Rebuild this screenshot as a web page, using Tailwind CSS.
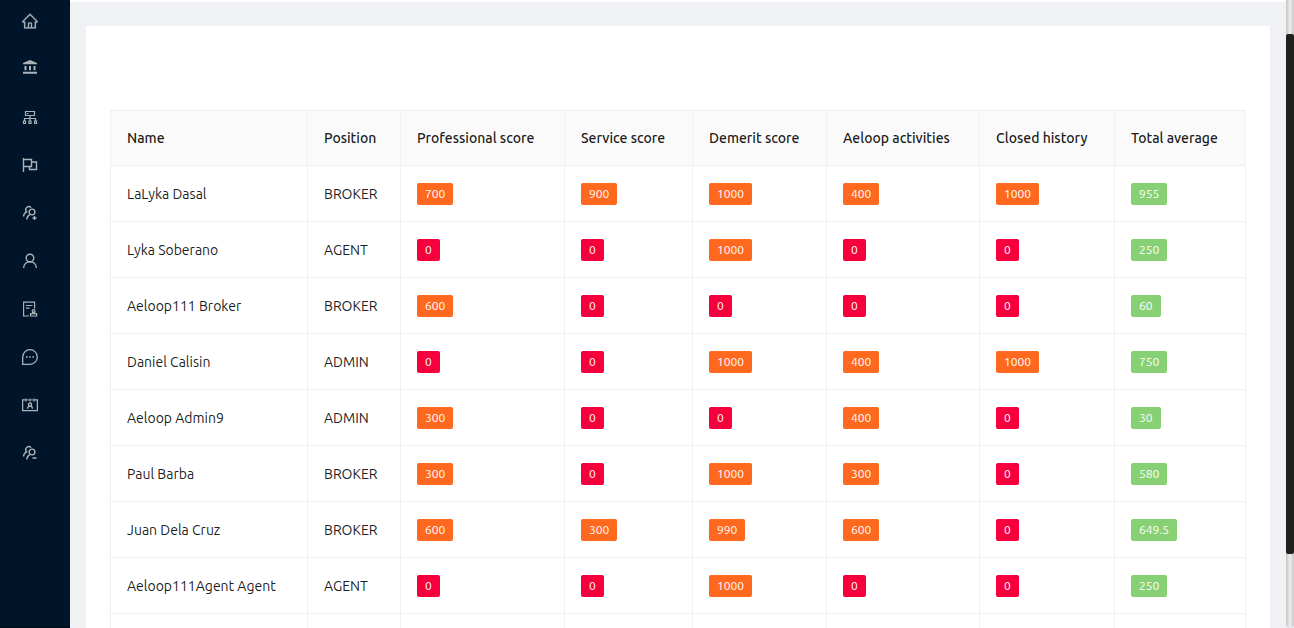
<!DOCTYPE html>
<html lang="en">
<head>
<meta charset="utf-8">
<meta name="viewport" content="width=device-width, initial-scale=1">
<title>Scores</title>
<script src="https://cdn.jsdelivr.net/npm/@tailwindcss/browser@4"></script>
</head>
<body class="flex h-screen overflow-hidden bg-[#f0f2f5] font-['Ubuntu','Noto_Sans',sans-serif] text-sm text-black/90">
<nav aria-label="Main" class="w-[70px] shrink-0 border-b border-[#000c17] bg-[#001529] text-[#abb2b9]">
  <ul class="-mt-[3px] flex flex-col">
    <li><a href="#" aria-label="Home" class="flex h-12 items-center pl-[22px]"><svg class="size-4" viewBox="48 48 928 928" fill="currentColor" stroke="currentColor" stroke-width="14"><path d="M946.5 505L560.1 118.8l-25.9-25.9a31.5 31.5 0 00-44.4 0L77.5 505a63.9 63.9 0 00-18.8 46c.4 35.2 29.7 63.3 64.9 63.3h42.5V940h691.8V614.3h43.4c17.1 0 33.2-6.7 45.3-18.8a63.6 63.6 0 0018.7-45.3c0-17-6.7-33.1-18.8-45.2zM568 868H456V664h112v204zm217.9-325.7V868H632V640c0-22.1-17.9-40-40-40H432c-22.1 0-40 17.9-40 40v228H238.1V542.3h-96l370-369.7 23.1 23.1L882 542.3h-96.1z"/></svg></a></li>
    <li><a href="#" aria-label="Bank" class="flex h-12 items-start pt-3.5 pl-[22px]"><svg class="size-4" viewBox="0 0 16 16" fill="currentColor"><path d="M8 1l7 3v1.2H1V4zM2.5 7h2v4.2h-2zM7 7h2v4.2H7zM11.5 7h2v4.2h-2zM1 12.8h14v1.9H1z"/></svg></a></li>
    <li><a href="#" aria-label="Organization" class="flex h-12 items-center pl-[22px]"><svg class="size-4" viewBox="0 0 16 16" fill="none" stroke="currentColor" stroke-width="1.2"><path d="M3.5 2.5h9v4h-9zM5 4.5h1.5M8 6.5v5M2.5 11.5v-2h11v2M1.5 12h2v2.5h-2zM7 12h2v2.5H7zM12.5 12h2v2.5h-2z"/></svg></a></li>
    <li><a href="#" aria-label="Flags" class="flex h-12 items-center pl-[22px]"><svg class="size-4" viewBox="0 0 16 16" fill="none" stroke="currentColor" stroke-width="1.4"><path d="M1.5 1v14M1.5 2.5h8v7h-8M9.5 5h5v7.5h-7v-3"/></svg></a></li>
    <li><a href="#" aria-label="Add users" class="flex h-12 items-center pl-[22px]"><svg class="size-4" viewBox="0 0 16 16" fill="none" stroke="currentColor" stroke-width="1.4"><path d="M9.2 2.6A3.1 3.1 0 1 0 4.6 6.8C2.8 7.6 1.7 9.3 1.5 11.5M7.8 9.6c-1.7.8-2.8 2.6-3 4.9M12.5 11v4M10.5 13h4"/><circle cx="10" cy="7" r="2.9"/></svg></a></li>
    <li><a href="#" aria-label="User" class="flex h-12 items-center pl-[22px]"><svg class="size-4" viewBox="0 0 16 16" fill="none" stroke="currentColor" stroke-width="1.4"><circle cx="8" cy="5" r="3.8"/><path d="M1.6 15c.2-3.6 2.8-6.2 6.4-6.2s6.2 2.6 6.4 6.2"/></svg></a></li>
    <li><a href="#" aria-label="Audit" class="flex h-12 items-center pl-[22px]"><svg class="size-4" viewBox="0 0 16 16" fill="none" stroke="currentColor" stroke-width="1.2"><path d="M7 15H1.6V1.2h11v6.3M4 4.5h6.5M4 7.2h3.5M8.6 15v-2.4h6V15zM10.6 12.6v-1.2h2v1.2"/><circle cx="11.6" cy="10" r="1.4"/></svg></a></li>
    <li><a href="#" aria-label="Messages" class="flex h-12 items-center pl-[22px]"><svg class="size-4" viewBox="0 0 16 16" fill="none" stroke="currentColor" stroke-width="1.3"><path d="M.7 15.3V8A7.3 7.3 0 1 1 8 15.3z"/><path fill="currentColor" stroke="none" d="M4 7.2h1.6v1.6H4zM7.2 7.2h1.6v1.6H7.2zM10.4 7.2H12v1.6h-1.6z"/></svg></a></li>
    <li><a href="#" aria-label="Contacts" class="flex h-12 items-center pl-[22px]"><svg class="size-4" viewBox="0 0 16 16" fill="none" stroke="currentColor" stroke-width="1.3"><path d="M3.2 2.9H.6v10.8h14.8V2.9h-2.6M4 1.5v3M8 1.5v3M12 1.5v3M5.2 2.9h1.6M9.2 2.9h1.6M5.5 11.8c.1-1.6 1-2.6 2.5-2.6s2.4 1 2.5 2.6"/><circle cx="8" cy="7.6" r="1.6"/></svg></a></li>
    <li><a href="#" aria-label="Remove users" class="flex h-12 items-center pl-[22px]"><svg class="size-4" viewBox="0 0 16 16" fill="none" stroke="currentColor" stroke-width="1.4"><path d="M9.2 2.6A3.1 3.1 0 1 0 4.6 6.8C2.8 7.6 1.7 9.3 1.5 11.5M7.8 9.6c-1.7.8-2.8 2.6-3 4.9M10.5 13h4"/><circle cx="10" cy="7" r="2.9"/></svg></a></li>
  </ul>
</nav>
<main class="min-w-0 flex-1 overflow-hidden border-t-2 border-white bg-[#f0f1f5] px-4 pt-6">
  <section class="bg-white px-6 pt-[84px] pb-6">
    <table class="w-full table-fixed border-separate border-spacing-0 border-t border-l border-[#f0f0f0] text-left whitespace-nowrap [&_td]:h-14 [&_td]:border-r [&_td]:border-b [&_td]:border-[#f0f0f0] [&_td]:px-4 [&_td]:py-0 [&_th]:h-[55px] [&_th]:border-r [&_th]:border-b [&_th]:border-[#f0f0f0] [&_th]:bg-[#fafafa] [&_th]:px-4 [&_th]:font-medium">
      <thead>
        <tr><th scope="col" class="w-[197px]">Name</th><th scope="col" class="w-[93px]">Position</th><th scope="col" class="w-[164px]">Professional score</th><th scope="col" class="w-[128px]">Service score</th><th scope="col" class="w-[134px]">Demerit score</th><th scope="col" class="w-[153px]">Aeloop activities</th><th scope="col" class="w-[135px]">Closed history</th><th scope="col" class="w-[131px]">Total average</th></tr>
      </thead>
      <tbody id="rows"></tbody>
    </table>
  </section>
</main>
<div aria-hidden="true" class="flex w-2 shrink-0 flex-col rounded-b-full bg-linear-to-r from-[#c4c4c4] via-[#eeeeee] to-[#c8c8c8] pt-[34px]">
  <div class="h-[520px] rounded-xs bg-[#20211f]"></div>
</div>
<script>
const people = [
  ['LaLyka Dasal', 'BROKER', 700, 900, 1000, 400, 1000, 955],
  ['Lyka Soberano', 'AGENT', 0, 0, 1000, 0, 0, 250],
  ['Aeloop111 Broker', 'BROKER', 600, 0, 0, 0, 0, 60],
  ['Daniel Calisin', 'ADMIN', 0, 0, 1000, 400, 1000, 750],
  ['Aeloop Admin9', 'ADMIN', 300, 0, 0, 400, 0, 30],
  ['Paul Barba', 'BROKER', 300, 0, 1000, 300, 0, 580],
  ['Juan Dela Cruz', 'BROKER', 600, 300, 990, 600, 0, 649.5],
  ['Aeloop111Agent Agent', 'AGENT', 0, 0, 1000, 0, 0, 250],
  ['', '']
];
const tag = (value, last) => {
  const color = last ? 'bg-[#87d074]' : value ? 'bg-[#ff681f]' : 'bg-[#f5003d]';
  return `<span class="inline-block rounded-xs px-2 text-xs leading-[22px] text-white align-middle ${color}">${value}</span>`;
};
document.getElementById('rows').innerHTML = people.map(([name, position, ...scores]) =>
  `<tr><td>${name}</td><td>${position}</td>${
    name ? scores.map((s, i) => `<td>${tag(s, i === 5)}</td>`).join('') : '<td></td>'.repeat(6)
  }</tr>`).join('');
</script>
</body>
</html>
